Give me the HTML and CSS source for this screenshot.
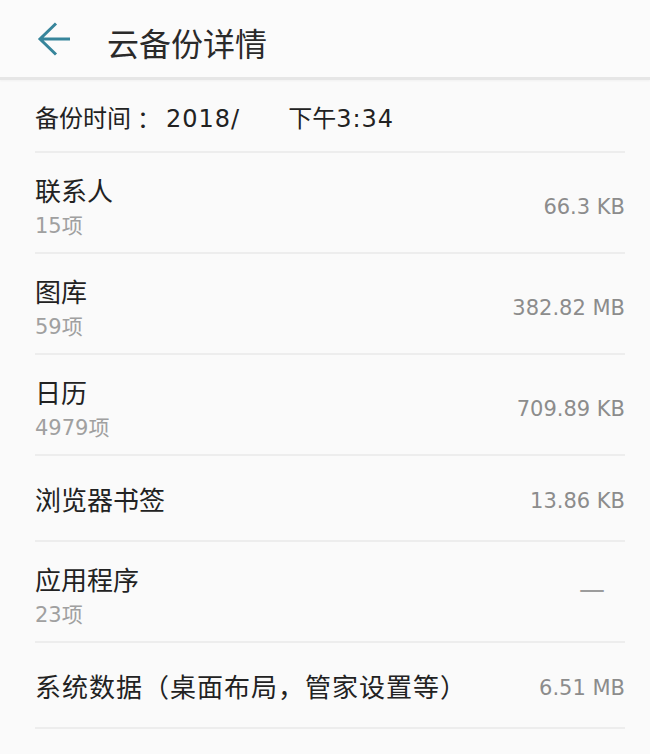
FILE: index.html
```html
<!DOCTYPE html>
<html lang="zh-CN">
<head>
<meta charset="utf-8">
<title>云备份详情</title>
<link rel="stylesheet" href="styles.css">
</head>
<body>
<div class="page">
  <header class="topbar">
    <svg class="back" width="34" height="34" viewBox="0 0 34 34" aria-hidden="true">
      <path d="M33 17 H3 M19 1.5 L3 17 L19 32.5" fill="none" stroke="#37859b" stroke-width="3" stroke-linecap="butt" stroke-linejoin="miter"/>
    </svg>
    <h1 class="title">云备份详情</h1>
  </header>
  <main class="list">
    <div class="row row-time">
      <span class="time-label">备份时间</span><span class="colon">：</span><span class="time-date">2018/</span><span class="time-val">下午</span><span class="time-clock">3:34</span>
    </div>
    <div class="row row-two">
      <div class="texts"><div class="name">联系人</div><div class="sub">15项</div></div>
      <div class="value">66.3 KB</div>
    </div>
    <div class="row row-two">
      <div class="texts"><div class="name">图库</div><div class="sub">59项</div></div>
      <div class="value">382.82 MB</div>
    </div>
    <div class="row row-two">
      <div class="texts"><div class="name">日历</div><div class="sub">4979项</div></div>
      <div class="value">709.89 KB</div>
    </div>
    <div class="row row-one">
      <div class="texts"><div class="name">浏览器书签</div></div>
      <div class="value">13.86 KB</div>
    </div>
    <div class="row row-two">
      <div class="texts"><div class="name">应用程序</div><div class="sub">23项</div></div>
      <div class="value dash">—</div>
    </div>
    <div class="row row-one">
      <div class="texts"><div class="name name-wide">系统数据（桌面布局，管家设置等）</div></div>
      <div class="value">6.51 MB</div>
    </div>
  </main>
</div>
</body>
</html>
```
FILE: styles.css
```css
html, body {
  margin: 0;
  padding: 0;
  background: #fafafa;
}
body {
  font-family: "DejaVu Sans", "Noto Sans CJK SC", sans-serif;
  color: #222;
  text-spacing-trim: space-all;
}
.page {
  width: 650px;
  min-height: 754px;
  background: #fafafa;
}
.topbar {
  height: 80px;
  display: flex;
  align-items: center;
  padding: 6px 0 0 37px;
  box-sizing: border-box;
  border-bottom: 3px solid #e6e6e6;
  box-shadow: 0 1px 2px rgba(0, 0, 0, 0.04);
  background: #fbfbfb;
}
.back {
  display: block;
  margin-top: -6px;
}
.title {
  margin: 0 0 0 36px;
  font-family: "Noto Sans CJK SC", sans-serif;
  font-size: 32px;
  font-weight: 400;
  line-height: 40px;
  color: #2a2a2a;
}
.list {
  padding: 0 25px 0 35px;
}
.row {
  display: flex;
  align-items: center;
  justify-content: space-between;
  border-bottom: 2px solid #ededed;
  box-sizing: border-box;
}
.row-time {
  height: 73px;
  justify-content: flex-start;
  font-size: 24px;
  line-height: 32px;
  color: #222;
  padding-top: 7px;
}
.colon {
  font-family: "Noto Sans CJK TC", sans-serif;
}
.time-date {
  margin-left: 11px;
  letter-spacing: 1px;
}
.time-val {
  margin-left: 48px;
}
.time-clock {
  letter-spacing: 1px;
}
.row-two {
  height: 101px;
}
.row-one {
  height: 86px;
}
.texts {
  display: flex;
  flex-direction: column;
}
.row-two .texts {
  padding-top: 10px;
}
.row-one .texts {
  padding-top: 6px;
}
.name {
  font-size: 26px;
  line-height: 32px;
  color: #222;
}
.name-wide {
  letter-spacing: 1px;
}
.sub {
  font-size: 21px;
  line-height: 28px;
  color: #a0a0a0;
  margin-top: 4px;
}
.value {
  font-size: 21px;
  line-height: 28px;
  color: #8c8c8c;
}
.row-two .value {
  padding-top: 8px;
}
.row-one .value {
  padding-top: 5px;
}
.row-two .dash {
  padding-top: 0;
  margin-top: -6px;
  padding-right: 20px;
  font-size: 26px;
  color: #9c9c9c;
}
```
